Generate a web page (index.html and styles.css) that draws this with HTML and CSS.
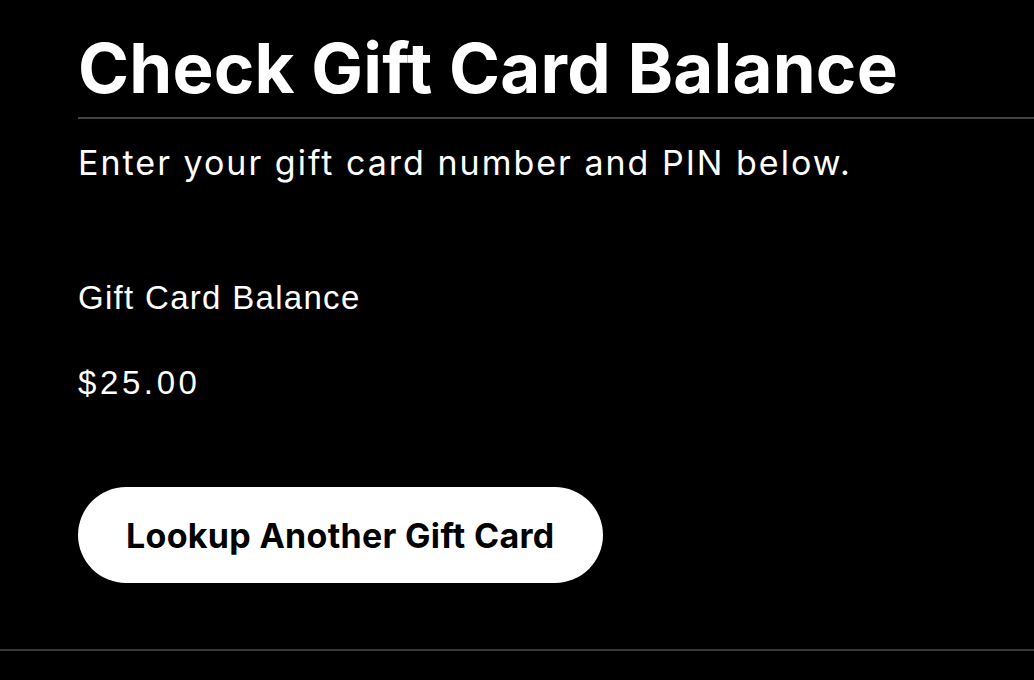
FILE: index.html
```html
<!DOCTYPE html>
<html lang="en">
<head>
<meta charset="utf-8">
<title>Check Gift Card Balance</title>
<link rel="stylesheet" href="styles.css">
</head>
<body>
<main class="page">
  <section class="content">
    <h1 class="title">Check Gift Card Balance</h1>
    <p class="intro">Enter your gift card number and PIN below.</p>
    <div class="result">
      <p class="label">Gift Card Balance</p>
      <p class="amount">$25.00</p>
    </div>
    <button class="btn" type="button">Lookup Another Gift Card</button>
  </section>
  <footer class="footer"></footer>
</main>
</body>
</html>
```
FILE: styles.css
```css
html, body {
  margin: 0;
  padding: 0;
  background: #000;
  color: #fff;
}
body {
  font-family: Inter, "Noto Sans", sans-serif;
  height: 680px;
  overflow: hidden;
}
.page {
  display: flex;
  flex-direction: column;
}
.content {
  padding-left: 78px;
  display: flex;
  flex-direction: column;
  align-items: flex-start;
}
.title {
  align-self: stretch;
  margin: 0;
  padding-top: 34px;
  padding-bottom: 14px;
  font-size: 69px;
  line-height: 69px;
  font-weight: 700;
  letter-spacing: 0.2px;
  border-bottom: 2px solid #3e4549;
}
.intro {
  margin: 27px 0 0;
  font-size: 34px;
  line-height: 34px;
  font-weight: 400;
  letter-spacing: 2px;
}
.result {
  margin-top: 101px;
}
.label, .amount {
  margin: 0;
  font-family: "Liberation Sans", Arial, sans-serif;
  font-size: 33px;
  line-height: 33px;
}
.label {
  letter-spacing: 1.3px;
}
.amount {
  margin-top: 52px;
  letter-spacing: 3.6px;
}
.btn {
  margin-top: 88px;
  height: 96px;
  padding: 0 48px;
  border: 0;
  border-radius: 48px;
  background: #fff;
  color: #000;
  font-family: Inter, "Noto Sans", sans-serif;
  font-size: 34px;
  font-weight: 700;
  letter-spacing: 0.3px;
}
.footer {
  margin-top: 66px;
  border-top: 2px solid #34393d;
}
```
